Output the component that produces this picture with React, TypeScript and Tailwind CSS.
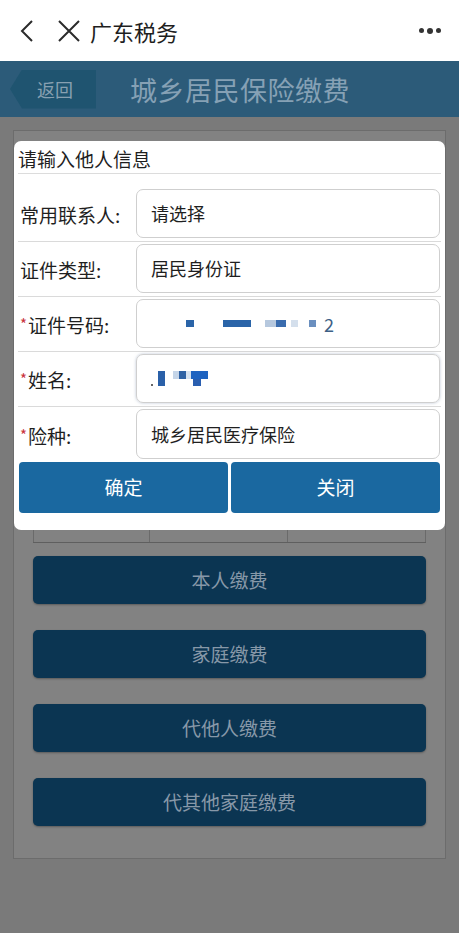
import React from "react"

const font = "font-['Noto_Sans_CJK_SC','Noto_Sans',sans-serif]"

function Req() {
  return <span className="text-[#c8323c] text-[15px] align-top mr-[1px]">*</span>
}

// masked id number, the original is pixelated in the screenshot
function MaskedId() {
  return (
    <div className="flex items-center h-full">
      <span className="w-[35px]" />
      <span className="w-[8px] h-[7px] bg-[#2a64a8]" />
      <span className="w-[29px]" />
      <span className="w-[28px] h-[7px] bg-[#2a64a8]" />
      <span className="w-[14px]" />
      <span className="w-[11px] h-[7px] bg-[#b6c8de]" />
      <span className="w-[10px] h-[7px] bg-[#3a6cae]" />
      <span className="w-[5px]" />
      <span className="w-[7px] h-[7px] bg-[#d4dfec]" />
      <span className="w-[11px]" />
      <span className="w-[7px] h-[7px] bg-[#6a8fbf]" />
      <span className="ml-[8px] text-[18px] text-[#3d5f86] leading-none">2</span>
    </div>
  )
}

function MaskedName() {
  return (
    <div className="flex items-end h-full pb-[16px]">
      <span className="w-[2px] h-[2px] bg-[#666] mr-[5px]" />
      <span className="w-[7px] h-[15px] bg-[#2a60a8]" />
      <span className="w-[8px]" />
      <div className="flex flex-col self-end">
        <div className="flex">
          <span className="w-[6px] h-[8px] bg-[#c5d5e8]" />
          <span className="w-[7px] h-[8px] bg-[#2f62a4]" />
          <span className="w-[5px] h-[8px] bg-[#d6e2ef]" />
          <span className="w-[17px] h-[8px] bg-[#1e63c0]" />
        </div>
        <div className="flex">
          <span className="w-[20px] h-[7px]" />
          <span className="w-[8px] h-[7px] bg-[#2a5fb0]" />
        </div>
      </div>
    </div>
  )
}

const rows: { label: string; req?: boolean; value: React.ReactNode; focus?: boolean }[] = [
  { label: "常用联系人:", value: "请选择" },
  { label: "证件类型:", value: "居民身份证" },
  { label: "证件号码:", req: true, value: <MaskedId /> },
  { label: "姓名:", req: true, value: <MaskedName />, focus: true },
  { label: "险种:", req: true, value: "城乡居民医疗保险" },
]

const payButtons = ["本人缴费", "家庭缴费", "代他人缴费", "代其他家庭缴费"]

export default function App() {
  return (
    <div className={`relative w-full h-[933px] bg-[#7a7a7a] overflow-hidden ${font}`}>
      {/* wechat top bar */}
      <div className="h-[61px] bg-white flex items-center pl-[19px] pr-[18px]">
        <svg width="16" height="24" viewBox="0 0 16 24" className="mr-[23px]">
          <path d="M13 2 L3 12 L13 22" fill="none" stroke="#2b2b2b" strokeWidth="2" />
        </svg>
        <svg width="22" height="22" viewBox="0 0 22 22" className="mr-[10px]">
          <path d="M1 1 L21 21 M21 1 L1 21" fill="none" stroke="#2b2b2b" strokeWidth="2" />
        </svg>
        <span className="text-[22px] text-[#1e1e1e] leading-none">广东税务</span>
        <div className="ml-auto flex items-center gap-[3px]">
          <span className="w-[5px] h-[5px] rounded-full bg-[#333]" />
          <span className="w-[6px] h-[6px] rounded-full bg-[#333]" />
          <span className="w-[5px] h-[5px] rounded-full bg-[#333]" />
        </div>
      </div>

      {/* page header */}
      <div className="h-[56px] bg-[#2c5b79] flex items-center pl-[10px]">
        <div className="w-[86px] h-[39px] bg-[#1f5470] flex items-center pl-[27px] [clip-path:polygon(12px_0,100%_0,100%_100%,12px_100%,0_50%)]">
          <span className="text-[18px] text-[#88a0b1] leading-none">返回</span>
        </div>
        <span className="ml-[34px] text-[27px] text-[#86a1b5] leading-none tracking-[0.5px]">城乡居民保险缴费</span>
      </div>

      {/* page panel (under the dim layer) */}
      <div className="mx-[13px] mt-[13px] h-[729px] bg-[#828282] border border-[#6c6c6c] px-[19px]">
        <div className="h-[399px]" />
        <div className="grid grid-cols-[117px_138px_1fr] h-[13px] border-b border-[#5f5f5f]">
          <div className="border-l border-r border-[#6a6a6a]" />
          <div className="border-r border-[#6a6a6a]" />
          <div className="border-r border-[#6a6a6a]" />
        </div>
        <div className="mt-[13px] flex flex-col gap-[26px]">
          {payButtons.map((t) => (
            <div
              key={t}
              className="h-[48px] rounded-[5px] bg-[#0b3552] shadow-[0_1px_2px_rgba(0,0,0,0.3)] flex items-center justify-center"
            >
              <span className="text-[19px] text-[#8798a8]">{t}</span>
            </div>
          ))}
        </div>
      </div>

      {/* dialog */}
      <div className="absolute left-[14px] top-[141px] w-[431px] h-[389px] bg-white rounded-[7px] px-[5px]">
        <div className="h-[33px] border-b border-[#dcdcdc] flex items-center pl-[0px] -mx-[1px]">
          <span className="text-[19px] text-[#1f1f1f] leading-none pt-[2px]">请输入他人信息</span>
        </div>
        <div className="mt-[13px]">
          {rows.map((r, i) => (
            <div
              key={r.label}
              className={`flex h-[55px] -mx-[1px] ${i < rows.length - 1 ? "border-b border-[#dadada]" : ""}`}
            >
              <div className="w-[118px] flex items-center pl-[2px] pt-[1px]">
                {r.req && <Req />}
                <span className="text-[19px] text-[#1f1f1f] leading-none">{r.label}</span>
              </div>
              <div className="flex-1 pt-[2px] pb-[3px] pr-[1px]">
                <div
                  className={`h-full rounded-[7px] border border-[#cfcfcf] pl-[14px] flex items-center text-[18px] text-[#1f1f1f] ${
                    r.focus ? "shadow-[0_0_3px_rgba(120,140,170,0.5)]" : ""
                  }`}
                >
                  {r.value}
                </div>
              </div>
            </div>
          ))}
        </div>
        <div className="flex gap-[3px] mt-[0px]">
          <button className="flex-1 h-[51px] rounded-[4px] bg-[#1a68a0] text-white text-[19px]">确定</button>
          <button className="flex-1 h-[51px] rounded-[4px] bg-[#1a68a0] text-white text-[19px]">关闭</button>
        </div>
      </div>
    </div>
  )
}
